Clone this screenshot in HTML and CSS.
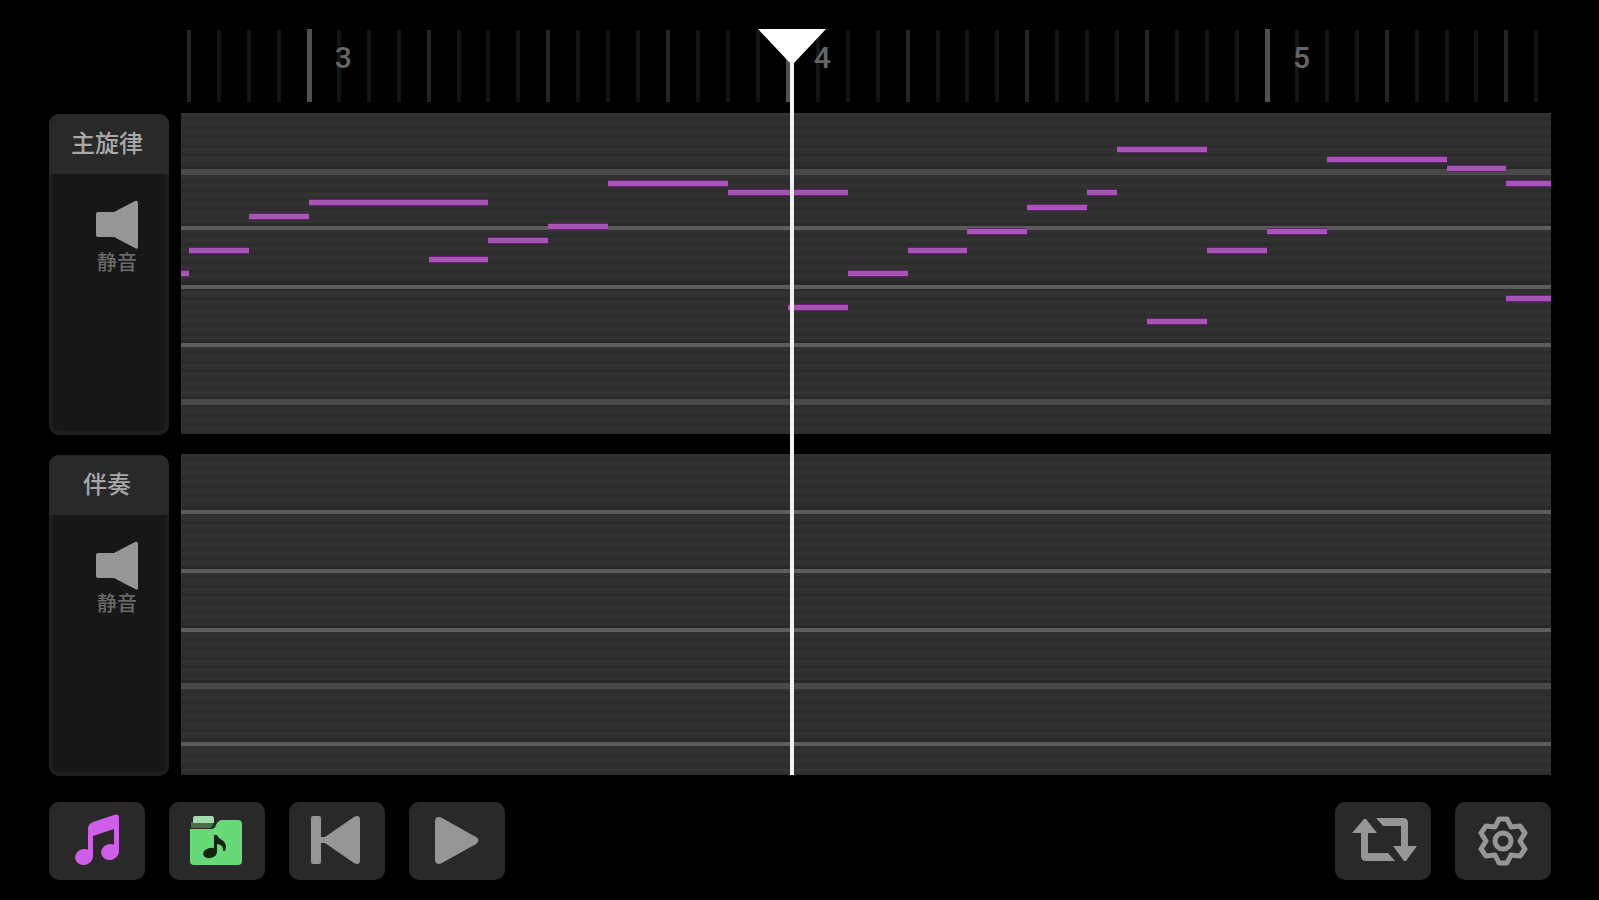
FILE: index.html
```html
<!DOCTYPE html>
<html lang="zh-CN">
<head>
    <meta charset="UTF-8">
    <meta name="viewport" content="width=device-width, initial-scale=1.0">
    <title>主旋律</title>
    <link rel="stylesheet" href="styles.css">
</head>
<body>
    <main class="editor">
        <div class="ruler" id="ruler"></div>

        <section class="track">
            <div class="track-panel">
                <h2 class="track-name">主旋律</h2>
                <button class="mute" type="button">
                    <svg width="42" height="50" viewBox="0 0 42 50"><path d="M2 12h16L39 1q3-1 3 2v44q0 3-3 1L18 37H2q-2 0-2-2V14q0-2 2-2z"/></svg>
                    <span>静音</span>
                </button>
            </div>
            <div class="roll" id="melody"></div>
        </section>

        <section class="track">
            <div class="track-panel">
                <h2 class="track-name">伴奏</h2>
                <button class="mute" type="button">
                    <svg width="42" height="50" viewBox="0 0 42 50"><path d="M2 12h16L39 1q3-1 3 2v44q0 3-3 1L18 37H2q-2 0-2-2V14q0-2 2-2z"/></svg>
                    <span>静音</span>
                </button>
            </div>
            <div class="roll" id="backing"></div>
        </section>

        <div class="overlay">
            <div class="playhead" id="playhead">
                <svg width="72" height="38" viewBox="0 0 72 38"><path d="M2 1h68L38 35h-4z"/></svg>
            </div>
        </div>
    </main>

    <nav class="toolbar">
        <button class="tool" type="button" aria-label="音符">
            <svg class="note-icon" viewBox="0 0 96 78">
                <ellipse cx="35" cy="55" rx="9" ry="8" transform="rotate(-15 35 55)"/>
                <ellipse cx="61" cy="50" rx="9" ry="8" transform="rotate(-15 61 50)"/>
                <path d="M39 55V27q0-5 5-7l21-7q5-2 5 3v34h-5V27l-21 7v21z"/>
            </svg>
        </button>
        <button class="tool" type="button" aria-label="曲库">
            <svg viewBox="0 0 96 78">
                <path fill="#68d979" d="M21 27h21q4 0 5-4l1-2q2-3 5-3h16q4 0 4 4v37q0 4-4 4H25q-4 0-4-4z"/>
                <path fill="#3d7548" d="M22 20h22v3l-3 3H22z"/>
                <path fill="#a4dcae" d="M26 14h17q2 0 2 3v4H24v-5q0-2 2-2z"/>
                <g fill="#10240f">
                    <ellipse cx="41" cy="51" rx="7" ry="5" transform="rotate(-15 41 51)"/>
                    <path d="M45 51V33h3q1 3 5 5 6 4 3 11h-2q1-6-6-7v9z"/>
                </g>
            </svg>
        </button>
        <button class="tool" type="button" aria-label="回到开头">
            <svg viewBox="0 0 96 78">
                <rect x="22" y="14" width="10" height="48" rx="2"/>
                <path d="M31 35h5L65 15q6-3 6 3v40q0 6-6 3L36 41h-5z"/>
            </svg>
        </button>
        <button class="tool" type="button" aria-label="播放">
            <svg viewBox="0 0 96 78"><path d="M26 20q0-7 7-4l34 19q5 3 0 7L33 61q-7 3-7-4z"/></svg>
        </button>
        <span class="spacer"></span>
        <button class="tool" type="button" aria-label="循环">
            <svg viewBox="0 0 96 78">
                <path d="M29 17h2l11 14h-9v20h20l7 8H31q-5 0-5-5V31h-9z"/>
                <path d="M41 16h27q5 0 5 5v23h9L71 59h-2L58 44h8V24H48z"/>
            </svg>
        </button>
        <button class="tool" type="button" aria-label="设置">
            <svg class="gear-icon" viewBox="0 0 96 78">
                <path d="M44 17h8l4 8 9-1 5 7-5 8 5 8-5 7-9-1-4 8h-8l-4-8-9 1-5-7 5-8-5-8 5-7 9 1z"/>
                <circle cx="48" cy="39" r="8"/>
            </svg>
        </button>
    </nav>

    <script src="script.js"></script>
</body>
</html>
```

FILE: styles.css
```css
:root {
    --panel: #171717;
    --panel-edge: #1e1e1e;
    --raised: #292929;
    --icon: #969696;
    --note: #a655b5;
    --note-edge: #652073;
}

* {
    box-sizing: border-box;
}

body {
    margin: 0;
    min-height: 100vh;
    padding: 28px 48px 20px 49px;
    display: flex;
    flex-direction: column;
    background: #000;
    font-family: Roboto, "Noto Sans CJK SC", sans-serif;
}

button {
    border: none;
    padding: 0;
    font-family: inherit;
    cursor: pointer;
}

svg {
    display: block;
    fill: var(--icon);
}

.editor {
    position: relative;
    flex: 1;
    display: flex;
    flex-direction: column;
    gap: 20px;
}

/* bar ruler */
.ruler {
    position: relative;
    height: 74px;
    margin: 0 0 -9px 132px;
}

.tick {
    position: absolute;
    top: 2px;
    bottom: 0;
    width: 4px;
    margin-left: -2px;
    background: #141414;
}

.tick.beat {
    background: #252525;
}

.tick.bar {
    top: 1px;
    width: 5px;
    background: #505050;
}

.bar-number {
    position: absolute;
    z-index: 1;
    top: 12px;
    margin-left: 26px;
    font-size: 30px;
    font-weight: 500;
    line-height: 36px;
    color: #666;
}

/* tracks */
.track {
    flex: 1;
    display: flex;
    gap: 12px;
}

.track-panel {
    width: 120px;
    margin: 1px 0 -1px;
    display: flex;
    flex-direction: column;
    align-items: center;
    border-radius: 10px;
    overflow: hidden;
    background: var(--panel);
    box-shadow: inset 0 0 0 4px var(--panel-edge);
}

.track-name {
    align-self: stretch;
    margin: 0;
    padding-right: 4px;
    background: var(--raised);
    color: #a8a8a8;
    font-size: 24px;
    font-weight: 500;
    line-height: 60px;
    text-align: center;
}

.mute {
    display: flex;
    flex-direction: column;
    align-items: center;
    margin: 26px 0 0 16px;
    background: none;
    color: #6a6a6a;
    font-size: 20px;
    font-weight: 500;
    line-height: 26px;
}

.roll {
    position: relative;
    flex: 1;
    overflow: hidden;
    background: repeating-linear-gradient(#343434 0, #303030 3px, #2c2c2c 6px, #303030 8px, #343434 9px);
}

.octave {
    position: absolute;
    left: 0;
    right: 0;
    height: 4px;
    margin-top: -2px;
    background: #5c5c5c;
    box-shadow: 0 -3px 0 #292929;
}

.octave.soft {
    height: 6px;
    margin-top: -3px;
    background: #494949;
}

.note {
    position: absolute;
    height: 7px;
    margin-top: -4px;
    border: solid var(--note-edge);
    border-width: 1px 0;
    background: var(--note);
}

/* playhead */
.overlay {
    position: absolute;
    inset: 0 0 0 132px;
    pointer-events: none;
}

.playhead {
    position: absolute;
    top: 0;
    bottom: 0;
    width: 72px;
    margin-left: -36px;
    background: linear-gradient(#f2f2f2, #f2f2f2) center bottom / 4px calc(100% - 20px) no-repeat;
}

.playhead svg {
    fill: #fff;
}

/* toolbar */
.toolbar {
    display: flex;
    gap: 24px;
    margin-top: 27px;
}

.tool {
    width: 96px;
    height: 78px;
    border-radius: 10px;
    background: var(--raised);
}

.spacer {
    flex: 1;
}

.note-icon {
    fill: #cf5fe8;
}

.gear-icon {
    fill: none;
    stroke: var(--icon);
    stroke-width: 5;
    stroke-linejoin: round;
}
```

FILE: script.js
```js
// horizontal positions are in sixteenth steps, vertical ones in px inside the roll
const VISIBLE_STEPS = 45.76;
const OFFSET = 0.27;
const FIRST_BAR = 3;

const notes = [
    [-0.27, 0.27, 161], [0, 2, 138], [2, 2, 104], [4, 6, 90],
    [8, 2, 147], [10, 2, 128], [12, 2, 114], [14, 4, 71],
    [18, 4, 80], [20, 2, 195], [22, 2, 161], [24, 2, 138],
    [26, 2, 119], [28, 2, 95], [30, 1, 80], [31, 3, 37],
    [32, 2, 209], [34, 2, 138], [36, 2, 119], [38, 4, 47],
    [42, 2, 56], [44, 2, 71], [44, 2, 186]
];

const octaves = {
    melody: [[59, true], [115, false], [174, false], [232, false], [289, true]],
    backing: [[58, false], [117, false], [176, false], [232, true], [290, false]]
};

const toPercent = steps => steps / VISIBLE_STEPS * 100 + '%';

function add(parent, className, style, text) {
    const el = document.createElement('div');
    el.className = className;
    Object.assign(el.style, style);
    if (text) el.textContent = text;
    parent.appendChild(el);
}

const ruler = document.getElementById('ruler');
for (let step = 0; step <= 45; step++) {
    const isBar = step % 16 === 4;
    const left = toPercent(step + OFFSET);
    add(ruler, 'tick' + (isBar ? ' bar' : step % 4 === 0 ? ' beat' : ''), { left });
    if (isBar) {
        add(ruler, 'bar-number', { left }, String(FIRST_BAR + (step - 4) / 16));
    }
}

for (const id in octaves) {
    const roll = document.getElementById(id);
    octaves[id].forEach(([y, soft]) => add(roll, soft ? 'octave soft' : 'octave', { top: y + 'px' }));
}

const melody = document.getElementById('melody');
notes.forEach(([step, length, y]) => {
    add(melody, 'note', { left: toPercent(step + OFFSET), width: toPercent(length), top: y + 'px' });
});

document.getElementById('playhead').style.left = toPercent(20.13 + OFFSET);
```
